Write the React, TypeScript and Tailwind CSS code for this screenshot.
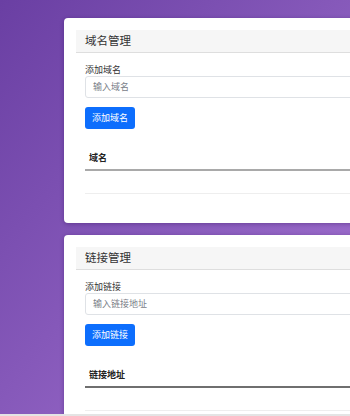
export default function App() {
  return (
    <div className="w-[350px] h-[416px] overflow-hidden flex flex-col" style={{ fontFamily: '"Noto Sans CJK SC", "Noto Sans", sans-serif' }}>
      <div className="h-[414px] shrink-0 overflow-hidden bg-gradient-to-br from-[#6a3fa3] to-[#a574d2] pt-[18px]">
        <Card title="域名管理" label="添加域名" placeholder="输入域名" button="添加域名" column="域名" borderColor="border-[#a9a9a9]" />
        <div className="h-[12px]" />
        <Card title="链接管理" label="添加链接" placeholder="输入链接地址" button="添加链接" column="链接地址" borderColor="border-[#6f6f6f]" />
      </div>
      <div className="h-[2px] bg-[#e4e4e4]" />
    </div>
  )
}

function Card({
  title,
  label,
  placeholder,
  button,
  column,
  borderColor,
}: {
  title: string
  label: string
  placeholder: string
  button: string
  column: string
  borderColor: string
}) {
  return (
    <div className="ml-[64px] w-[340px] bg-white rounded-[4px] shadow-[0_1px_4px_rgba(40,10,80,0.35)] pt-[12px] pl-[12px] pb-[29px]">
      <div className="h-[23px] bg-[#f6f6f6] border-b border-[#dedede] flex items-center pl-[9px] text-[11.5px] text-[#333]">
        {title}
      </div>

      <div className="pl-[9px]">
        <div className="mt-[11px] h-[12px] leading-[12px] text-[9px] text-[#333]">{label}</div>
        <div className="h-[22px] border border-[#dfe2e6] rounded-[3px] flex items-center pl-[7px] text-[9px] text-[#7a8088]">
          {placeholder}
        </div>

        <button className="mt-[9px] h-[22px] px-[7px] bg-[#0d6efd] rounded-[3px] text-white text-[9px] flex items-center">
          {button}
        </button>

        <div className="mt-[17px]">
          <div className={`h-[25px] border-b-2 ${borderColor} flex items-center pl-[4px] text-[9px] font-bold text-[#222]`}>
            {column}
          </div>
          <div className="h-[23px] border-b border-[#eeeeee]" />
        </div>
      </div>
    </div>
  )
}
